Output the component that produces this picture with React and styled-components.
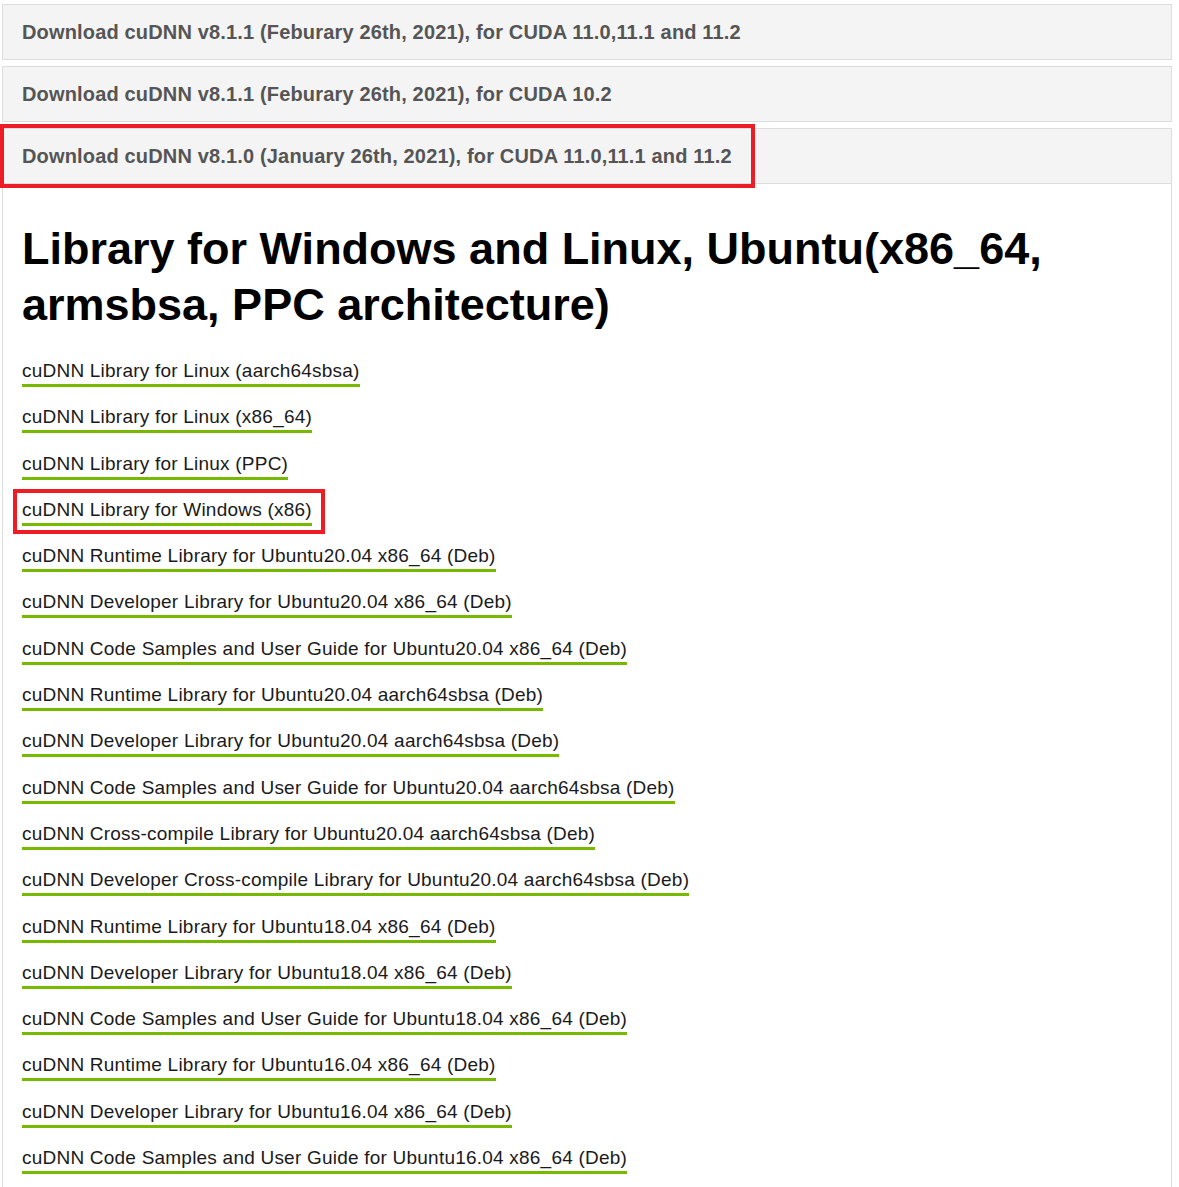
import * as React from "react"
import styled, { createGlobalStyle } from "styled-components"

const GlobalStyle = createGlobalStyle`
  body {
    margin: 0;
    background: #fff;
    font-family: "Liberation Sans", Arial, sans-serif;
  }
`

const Page = styled.div`
  width: 1170px;
  padding: 4px 0 0 2px;
`

const Section = styled.section`
  margin-bottom: ${({ open }) => (open ? "0" : "6px")};
`

const Bar = styled.div`
  height: 54px;
  display: flex;
  align-items: center;
  padding: 0 19px;
  background: #f4f4f4;
  border: 1px solid #dcdcdc;
  color: #555;
  font-size: 20px;
  letter-spacing: 0.16px;
  font-weight: 700;
`

const Marked = styled.span`
  position: relative;
  &::after {
    content: "";
    position: absolute;
    left: -22px;
    right: -23px;
    top: -21px;
    bottom: -20px;
    border: 4px solid #ee1c25;
    pointer-events: none;
  }
`

const Panel = styled.div`
  border-left: 1px solid #dcdcdc;
  border-right: 1px solid #dcdcdc;
  padding: 37px 19px 20px;
`

const Heading = styled.h2`
  margin: 0 0 24px;
  font-size: 45px;
  line-height: 56px;
  font-weight: 700;
  color: #000;
`

const LinkList = styled.ul`
  list-style: none;
  margin: 0;
  padding: 0;
`

const LinkItem = styled.li`
  height: 46.3px;
`

const DocLink = styled.a`
  position: relative;
  display: inline-block;
  font-size: 19px;
  letter-spacing: 0.22px;
  line-height: 27px;
  color: #1a1a1a;
  text-decoration: none;
  border-bottom: 3px solid #76b900;
  ${({ marked }) =>
    marked &&
    `
    &::after {
      content: "";
      position: absolute;
      left: -9px;
      right: -13px;
      top: -7px;
      bottom: -11px;
      border: 4px solid #ee1c25;
    }
  `}
`

const links = [
  "cuDNN Library for Linux (aarch64sbsa)",
  "cuDNN Library for Linux (x86_64)",
  "cuDNN Library for Linux (PPC)",
  "cuDNN Library for Windows (x86)",
  "cuDNN Runtime Library for Ubuntu20.04 x86_64 (Deb)",
  "cuDNN Developer Library for Ubuntu20.04 x86_64 (Deb)",
  "cuDNN Code Samples and User Guide for Ubuntu20.04 x86_64 (Deb)",
  "cuDNN Runtime Library for Ubuntu20.04 aarch64sbsa (Deb)",
  "cuDNN Developer Library for Ubuntu20.04 aarch64sbsa (Deb)",
  "cuDNN Code Samples and User Guide for Ubuntu20.04 aarch64sbsa (Deb)",
  "cuDNN Cross-compile Library for Ubuntu20.04 aarch64sbsa (Deb)",
  "cuDNN Developer Cross-compile Library for Ubuntu20.04 aarch64sbsa (Deb)",
  "cuDNN Runtime Library for Ubuntu18.04 x86_64 (Deb)",
  "cuDNN Developer Library for Ubuntu18.04 x86_64 (Deb)",
  "cuDNN Code Samples and User Guide for Ubuntu18.04 x86_64 (Deb)",
  "cuDNN Runtime Library for Ubuntu16.04 x86_64 (Deb)",
  "cuDNN Developer Library for Ubuntu16.04 x86_64 (Deb)",
  "cuDNN Code Samples and User Guide for Ubuntu16.04 x86_64 (Deb)",
]

const App = () => (
  <Page>
    <GlobalStyle />
    <Section>
      <Bar>Download cuDNN v8.1.1 (Feburary 26th, 2021), for CUDA 11.0,11.1 and 11.2</Bar>
    </Section>
    <Section>
      <Bar>Download cuDNN v8.1.1 (Feburary 26th, 2021), for CUDA 10.2</Bar>
    </Section>
    <Section open>
      <Bar>
        <Marked>Download cuDNN v8.1.0 (January 26th, 2021), for CUDA 11.0,11.1 and 11.2</Marked>
      </Bar>
      <Panel>
        <Heading>
          Library for Windows and Linux, Ubuntu(x86_64,
          <br />
          armsbsa, PPC architecture)
        </Heading>
        <LinkList>
          {links.map((text, i) => (
            <LinkItem key={text}>
              <DocLink href="#" marked={i === 3}>
                {text}
              </DocLink>
            </LinkItem>
          ))}
        </LinkList>
      </Panel>
    </Section>
  </Page>
)

export default App
